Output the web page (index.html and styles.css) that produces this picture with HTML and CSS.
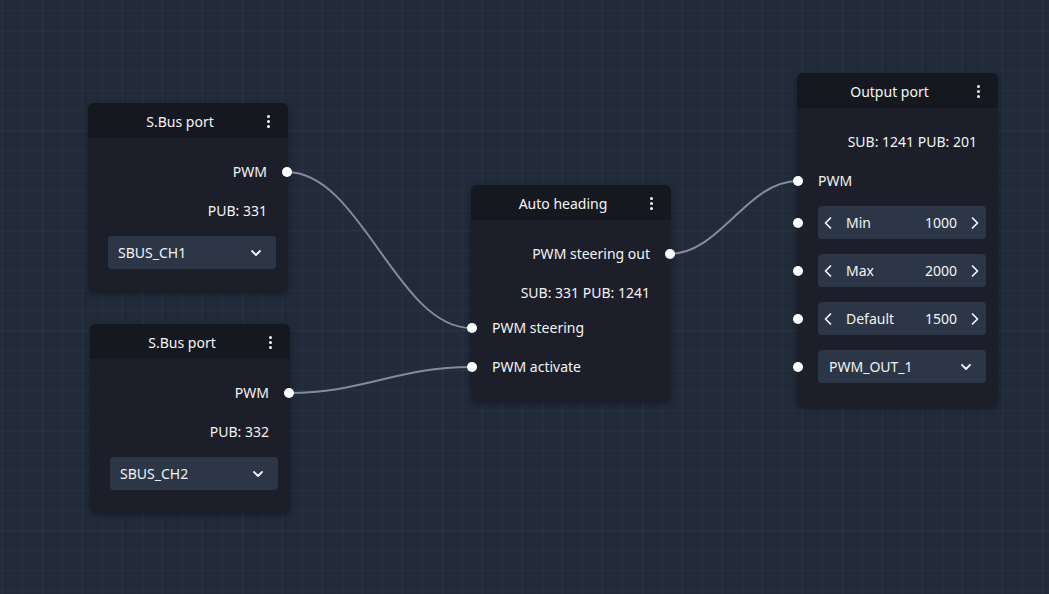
FILE: index.html
```html
<!DOCTYPE html>
<html>
<head>
<meta charset="utf-8">
<link rel="stylesheet" href="styles.css">
</head>
<body>
<div class="canvas">
  <svg class="wires" width="1049" height="594" viewBox="0 0 1049 594">
    <path d="M287 172 C 360.6 172, 397.4 328, 471 328"/>
    <path d="M289 393 C 362.2 393, 397.8 367, 471 367"/>
    <path d="M669 254 C 720.2 254, 746.8 181, 798 181"/>
  </svg>

  <div class="node n1">
    <div class="head"><span class="title">S.Bus port</span><span class="kebab"><i></i><i></i><i></i></span></div>
    <div class="body">
      <div class="row out">PWM<span class="sock"></span></div>
      <div class="row info">PUB: 331</div>
      <div class="ctl select"><span>SBUS_CH1</span><svg class="chev" width="10" height="6" viewBox="0 0 10 6"><path d="M1 1 L5 5 L9 1"/></svg></div>
    </div>
  </div>

  <div class="node n2">
    <div class="head"><span class="title">S.Bus port</span><span class="kebab"><i></i><i></i><i></i></span></div>
    <div class="body">
      <div class="row out">PWM<span class="sock"></span></div>
      <div class="row info">PUB: 332</div>
      <div class="ctl select"><span>SBUS_CH2</span><svg class="chev" width="10" height="6" viewBox="0 0 10 6"><path d="M1 1 L5 5 L9 1"/></svg></div>
    </div>
  </div>

  <div class="node n3">
    <div class="head"><span class="title">Auto heading</span><span class="kebab"><i></i><i></i><i></i></span></div>
    <div class="body">
      <div class="row out">PWM steering out<span class="sock"></span></div>
      <div class="row info">SUB: 331 PUB: 1241</div>
      <div class="inputs tight">
        <div class="row in"><span class="sock"></span>PWM steering</div>
        <div class="row in"><span class="sock"></span>PWM activate</div>
      </div>
    </div>
  </div>

  <div class="node n4">
    <div class="head"><span class="title">Output port</span><span class="kebab"><i></i><i></i><i></i></span></div>
    <div class="body">
      <div class="row info">SUB: 1241 PUB: 201</div>
      <div class="row in"><span class="sock"></span>PWM</div>
      <div class="ctl-row"><span class="sock"></span>
        <div class="ctl num"><svg class="arr" width="8" height="12" viewBox="0 0 8 12"><path d="M6.5 1 L1.5 6 L6.5 11"/></svg><span class="lbl">Min</span><span class="val">1000</span><svg class="arr" width="8" height="12" viewBox="0 0 8 12"><path d="M1.5 1 L6.5 6 L1.5 11"/></svg></div>
      </div>
      <div class="ctl-row"><span class="sock"></span>
        <div class="ctl num"><svg class="arr" width="8" height="12" viewBox="0 0 8 12"><path d="M6.5 1 L1.5 6 L6.5 11"/></svg><span class="lbl">Max</span><span class="val">2000</span><svg class="arr" width="8" height="12" viewBox="0 0 8 12"><path d="M1.5 1 L6.5 6 L1.5 11"/></svg></div>
      </div>
      <div class="ctl-row"><span class="sock"></span>
        <div class="ctl num"><svg class="arr" width="8" height="12" viewBox="0 0 8 12"><path d="M6.5 1 L1.5 6 L6.5 11"/></svg><span class="lbl">Default</span><span class="val">1500</span><svg class="arr" width="8" height="12" viewBox="0 0 8 12"><path d="M1.5 1 L6.5 6 L1.5 11"/></svg></div>
      </div>
      <div class="ctl-row"><span class="sock"></span>
        <div class="ctl select wide"><span>PWM_OUT_1</span><svg class="chev" width="10" height="6" viewBox="0 0 10 6"><path d="M1 1 L5 5 L9 1"/></svg></div>
      </div>
    </div>
  </div>
</div>
</body>
</html>
```
FILE: styles.css
```css
* { box-sizing: border-box; }
html, body { margin: 0; padding: 0; }
body {
  font-family: "Noto Sans", "Open Sans", sans-serif;
  font-size: 14px;
  color: #f2f3f5;
}
.canvas {
  position: relative;
  width: 1049px;
  height: 594px;
  overflow: hidden;
  background-color: #212b3a;
  background-image:
    linear-gradient(to right, rgba(255,255,255,0.018) 1px, transparent 1px),
    linear-gradient(to bottom, rgba(255,255,255,0.018) 1px, transparent 1px),
    linear-gradient(to right, rgba(255,255,255,0.028) 1px, transparent 1px),
    linear-gradient(to bottom, rgba(255,255,255,0.028) 1px, transparent 1px);
  background-size: 100px 100px, 100px 100px, 20px 20px, 20px 20px;
  background-position: 43px 0, 0 31px, 2px 0, 0 10px;
}
.wires {
  position: absolute;
  left: 0; top: 0;
  fill: none;
  stroke: #828c9c;
  stroke-width: 2;
}
.node {
  position: absolute;
  width: 200px;
  background: #1c1f29;
  border-radius: 6px;
  box-shadow: 0 2px 6px rgba(0,0,0,0.35);
}
.n1 { left: 88px; top: 103px; }
.n2 { left: 90px; top: 324px; }
.n3 { left: 471px; top: 185px; }
.n4 { left: 797px; top: 73px; width: 201px; }

.head {
  height: 35px;
  display: flex;
  align-items: center;
  padding: 1px 12px 0;
  background: #16181f;
  border-radius: 6px 6px 0 0;
}
.title {
  flex: 1;
  text-align: center;
  font-size: 14px;
  color: #f4f5f7;
}
.kebab {
  width: 16px;
  display: flex;
  flex-direction: column;
  align-items: center;
  gap: 2px;
}
.kebab i {
  display: block;
  width: 3px;
  height: 3px;
  border-radius: 50%;
  background: #f4f5f7;
}
.body {
  padding: 14px 0 23px;
}
.n3 .body { padding-bottom: 16px; }
.n4 .body { padding-bottom: 24px; }

.row {
  position: relative;
  height: 39px;
  display: flex;
  align-items: center;
  padding: 0 21px;
  white-space: nowrap;
}
.row.out, .row.info { justify-content: flex-end; }
.inputs.tight { margin-top: -4px; }

.sock {
  position: absolute;
  top: 50%;
  width: 10px;
  height: 10px;
  margin-top: -5px;
  border-radius: 50%;
  background: #ffffff;
}
.out .sock { right: -4px; }
.in .sock, .ctl-row .sock { left: -4px; }

.ctl-row {
  position: relative;
  margin-top: 15px;
}
.row + .ctl-row { margin-top: 6px; }

.ctl {
  height: 33px;
  margin: 6px 12px 0 20px;
  background: #2c3646;
  border-radius: 4px;
  display: flex;
  align-items: center;
}
.ctl-row .ctl { margin: 0 12px 0 21px; }
.select {
  padding: 0 15px 0 10px;
  justify-content: space-between;
}
.select.wide { padding-left: 11px; }
.chev {
  fill: none;
  stroke: #f4f5f7;
  stroke-width: 1.8;
  stroke-linecap: round;
  stroke-linejoin: round;
}
.num {
  padding: 0 7px 0 6px;
}
.arr {
  flex: none;
  fill: none;
  stroke: #f4f5f7;
  stroke-width: 1.7;
  stroke-linecap: round;
  stroke-linejoin: round;
}
.lbl {
  margin-left: 14px;
  flex: 1;
}
.val {
  margin-right: 14px;
}
```
